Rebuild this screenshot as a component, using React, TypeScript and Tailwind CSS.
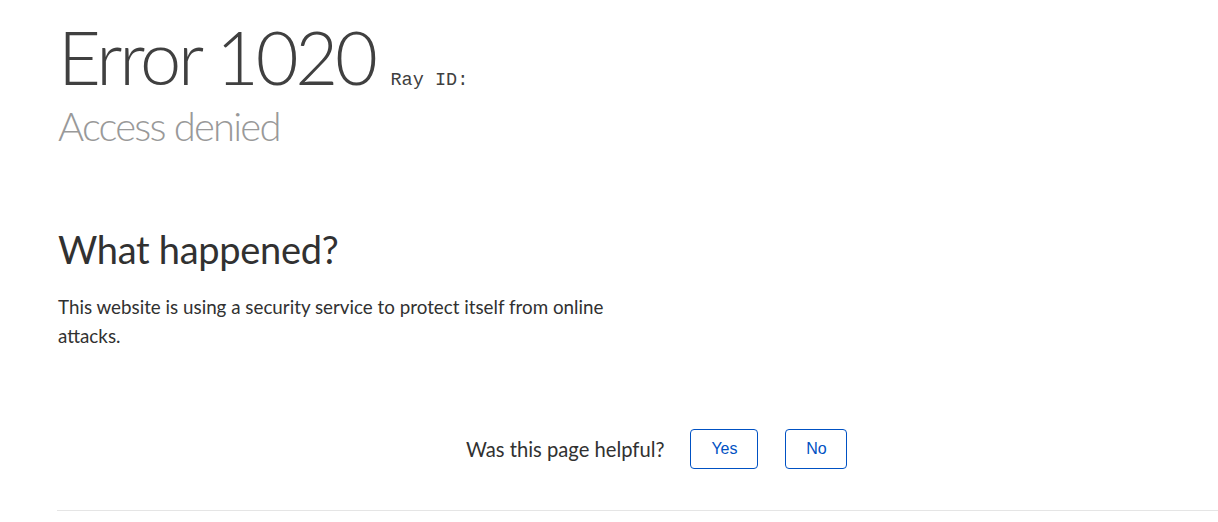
export default function App() {
  return (
    <div className="min-h-[522px] bg-white pl-[57px] font-['Lato',sans-serif]">
      <header className="pl-px">
        <div className="flex items-baseline gap-[16px] pt-[12px]">
          <h1 className="text-[74px] leading-[89px] font-light tracking-[-3.3px] text-[#404040]">Error 1020</h1>
          <span className="font-['Liberation_Mono',monospace] text-[18.5px] text-[#404040]">Ray ID:</span>
        </div>
        <h2 className="mt-[1px] text-[40px] leading-[48px] font-light tracking-[-1.8px] text-[#999999]">Access denied</h2>
      </header>

      <section className="pl-px">
        <h2 className="mt-[76px] text-[38px] leading-[46px] font-normal tracking-[-0.3px] text-[#313131]">What happened?</h2>
        <p className="mt-[20px] w-[570px] text-[18.8px] leading-[29px] text-[#313131]">
          This website is using a security service to protect itself from online attacks.
        </p>
      </section>

      <div className="mt-[79px] flex h-[40px] items-center pl-[409px]">
        <span className="text-[20.2px] leading-[40px] text-[#313131]">Was this page helpful?</span>
        <button
          type="button"
          className="ml-[26px] h-[40px] w-[68px] rounded-[4px] border border-[#0051c3] font-['Liberation_Sans',sans-serif] text-[16px] text-[#0051c3]"
        >
          Yes
        </button>
        <button
          type="button"
          className="ml-[27px] h-[40px] w-[62px] rounded-[4px] border border-[#0051c3] font-['Liberation_Sans',sans-serif] text-[16px] text-[#0051c3]"
        >
          No
        </button>
      </div>

      <div className="mt-[41px] border-t border-[#e5e5e5]" />
    </div>
  )
}
